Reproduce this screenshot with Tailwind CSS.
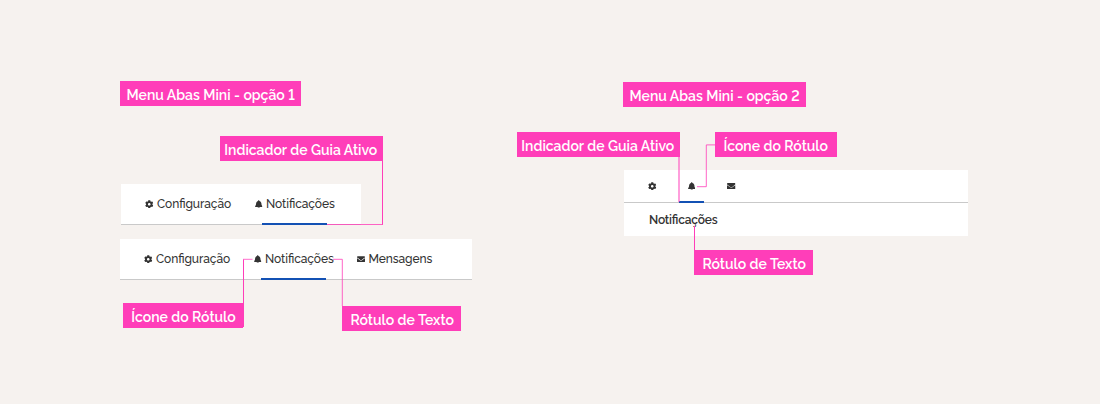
<!DOCTYPE html>
<html lang="pt-BR">
<head>
<meta charset="utf-8">
<title>Menu Abas Mini</title>
<script src="https://cdn.jsdelivr.net/npm/@tailwindcss/browser@4"></script>
</head>
<body class="bg-[#f6f2ef] font-['Raleway','Open_Sans',sans-serif] lining-nums">
<svg class="hidden">
  <symbol id="gear" viewBox="0 0 512 512"><path d="M487.400 315.700l-42.600-24.600c4.300-23.200 4.300-47 0-70.200l42.600-24.600c4.900-2.800 7.100-8.600 5.500-14-11.100-35.600-30-67.800-54.700-94.600-3.800-4.100-10-5.100-14.800-2.300L380.800 110c-17.900-15.400-38.500-27.300-60.800-35.100V25.800c0-5.600-3.900-10.500-9.400-11.700-36.700-8.200-74.300-7.800-109.200 0-5.500 1.200-9.400 6.100-9.400 11.700V75c-22.200 7.900-42.800 19.800-60.800 35.100L88.700 85.500c-4.900-2.800-11-1.900-14.800 2.300-24.700 26.700-43.600 58.900-54.700 94.600-1.700 5.400.6 11.200 5.500 14L67.300 221c-4.300 23.200-4.300 47 0 70.200l-42.600 24.600c-4.900 2.800-7.100 8.600-5.500 14 11.100 35.600 30 67.800 54.700 94.600 3.800 4.100 10 5.100 14.800 2.300l42.600-24.600c17.900 15.400 38.500 27.300 60.800 35.100v49.200c0 5.600 3.900 10.500 9.400 11.700 36.700 8.200 74.300 7.800 109.200 0 5.500-1.200 9.400-6.100 9.400-11.700v-49.200c22.200-7.900 42.800-19.800 60.800-35.100l42.600 24.600c4.900 2.800 11 1.900 14.800-2.300 24.700-26.700 43.600-58.900 54.700-94.600 1.500-5.500-.7-11.300-5.600-14.100zM256 336c-44.100 0-80-35.900-80-80s35.900-80 80-80 80 35.900 80 80-35.900 80-80 80z"/></symbol>
  <symbol id="bell" viewBox="0 0 448 512"><path d="M224 512c35.320 0 63.970-28.650 63.970-64H160.030c0 35.350 28.650 64 63.970 64zm215.390-149.710c-19.320-20.760-55.470-51.990-55.470-154.290 0-77.700-54.480-139.900-127.940-155.160V32c0-17.670-14.320-32-31.980-32s-31.980 14.330-31.980 32v20.840C118.560 68.100 64.080 130.300 64.080 208c0 102.300-36.150 133.530-55.470 154.290-6 6.450-8.660 14.160-8.610 21.710.11 16.400 12.980 32 32.100 32h383.800c19.120 0 32-15.600 32.100-32 .05-7.550-2.610-15.270-8.610-21.710z"/></symbol>
  <symbol id="mail" viewBox="0 0 512 384"><path d="M502.300 126.800c3.900-3.100 9.700-.2 9.700 4.700V336c0 26.500-21.500 48-48 48H48c-26.500 0-48-21.500-48-48V131.600c0-5 5.700-7.800 9.700-4.700 22.400 17.400 52.100 39.500 154.100 113.600 21.100 15.400 56.700 47.800 92.200 47.600 35.700.3 72-32.800 92.300-47.600 102-74.100 131.600-96.300 154-113.700zM256 256c23.200.4 56.600-29.200 73.400-41.400 132.700-96.300 142.800-104.700 173.400-128.700 5.800-4.500 9.200-11.500 9.200-18.900V48c0-26.500-21.500-48-48-48H48C21.500 0 0 21.500 0 48v19c0 7.400 3.400 14.300 9.200 18.900 30.600 23.900 40.700 32.400 173.400 128.700 16.800 12.200 50.200 41.800 73.400 41.400z"/></symbol>
</svg>

<main class="relative flex h-[404px] w-[1100px] overflow-hidden text-xs font-medium text-[#333]">

  <section class="ml-[120px] mt-[81px] w-[352px]">
    <h2 class="h-[25px] w-[181px] bg-[#ff3eb9] pl-[6.500px] text-sm leading-[29px] font-semibold whitespace-nowrap text-white">Menu Abas Mini - opção 1</h2>

    <nav class="mt-[78px] ml-px flex h-[41px] w-[240px] border-b border-[#c9c9c9] bg-white pl-6 leading-10 tracking-[-0.070px] [font-feature-settings:'liga']">
      <a class="flex items-center"><svg class="mr-[3.500px] size-[8.500px] fill-[#333]"><use href="#gear"/></svg><span class="w-[74px]">Configuração</span></a>
      <a class="relative ml-6 flex items-center"><svg class="mr-[3.500px] h-[8.500px] w-[7.500px] fill-[#333]"><use href="#bell"/></svg><span class="w-[69px]">Notificações</span><span class="absolute -bottom-px left-[7px] h-0.5 w-[65px] bg-[#1351b4]"></span></a>
    </nav>

    <nav class="mt-[14px] flex h-[41px] w-[352px] border-b border-[#c9c9c9] bg-white pl-6 leading-10 tracking-[-0.070px] [font-feature-settings:'liga']">
      <a class="flex items-center"><svg class="mr-[3.500px] size-[8.500px] fill-[#333]"><use href="#gear"/></svg><span class="w-[74px]">Configuração</span></a>
      <a class="relative ml-6 flex items-center"><svg class="mr-[3.500px] h-[8.500px] w-[7.500px] fill-[#333]"><use href="#bell"/></svg><span class="w-[69px]">Notificações</span><span class="absolute -bottom-px left-[7px] h-0.5 w-[65px] bg-[#1351b4]"></span></a>
      <a class="ml-[22.700px] flex items-center"><svg class="mr-[3.700px] h-[6.500px] w-2 fill-[#333]"><use href="#mail"/></svg>Mensagens</a>
    </nav>
  </section>

  <section class="mt-[82px] ml-[151px] w-[345px]">
    <h2 class="h-[25px] w-[183px] bg-[#ff3eb9] pl-[6.500px] text-sm leading-[29px] font-semibold whitespace-nowrap text-white">Menu Abas Mini - opção 2</h2>
    <div class="mt-[63px] ml-px h-[66px] w-[344px] bg-white">
      <nav class="flex h-[33px] border-b border-[#c9c9c9] pl-6">
        <a class="flex items-center"><svg class="size-[8.500px] fill-[#333]"><use href="#gear"/></svg></a>
        <a class="relative ml-[22.500px] flex w-[25px] items-center justify-center"><svg class="h-[8.500px] w-[7.500px] fill-[#333]"><use href="#bell"/></svg><span class="absolute -bottom-px left-0 h-0.5 w-[25px] bg-[#1351b4]"></span></a>
        <a class="ml-[23px] flex items-center"><svg class="h-[6.500px] w-[8.500px] fill-[#333]"><use href="#mail"/></svg></a>
      </nav>
      <p class="h-[33px] pl-[25px] leading-[35px] font-semibold tracking-[-0.180px] [font-feature-settings:'liga']">Notificações</p>
    </div>
  </section>

  <!-- Callout leader lines -->
  <svg class="absolute inset-0 h-[404px] w-[1100px] fill-none stroke-[#ff3eb9]" stroke-width="1">
    <path d="M382.500 160V224.500"/>
    <path d="M327 224.500H383" stroke-opacity=".8"/>
    <path d="M243.500 327V259.500"/>
    <path d="M243 259.300H252.500" stroke-opacity=".75"/>
    <path d="M333 259.300H342.300V306" stroke-opacity=".8"/>
    <path d="M679 157V202" stroke-width="2" stroke-opacity=".5"/>
    <path d="M715 144.900H706.300V186.700H697" stroke-opacity=".8"/>
    <path d="M694.500 226V251"/>
  </svg>

  <!-- Callout labels -->
  <div class="text-sm leading-[29px] font-semibold whitespace-nowrap text-white">
    <span class="absolute top-[136px] left-[220px] h-[25px] w-[163px] bg-[#ff3eb9] pl-[4.300px]">Indicador de Guia Ativo</span>
    <span class="absolute top-[303px] left-[123px] h-[25px] w-[120px] bg-[#ff3eb9] pl-[8.300px]">Ícone do Rótulo</span>
    <span class="absolute top-[306px] left-[342px] h-[25px] w-[119px] bg-[#ff3eb9] pl-[8.500px]">Rótulo de Texto</span>
    <span class="absolute top-[132px] left-[517px] h-[25px] w-[162.500px] bg-[#ff3eb9] pl-[4.300px]">Indicador de Guia Ativo</span>
    <span class="absolute top-[132px] left-[715px] h-[25px] w-[122px] bg-[#ff3eb9] pl-[8.500px]">Ícone do Rótulo</span>
    <span class="absolute top-[250px] left-[694px] h-[25px] w-[119px] bg-[#ff3eb9] pl-[8.500px]">Rótulo de Texto</span>
  </div>
</main>
</body>
</html>
